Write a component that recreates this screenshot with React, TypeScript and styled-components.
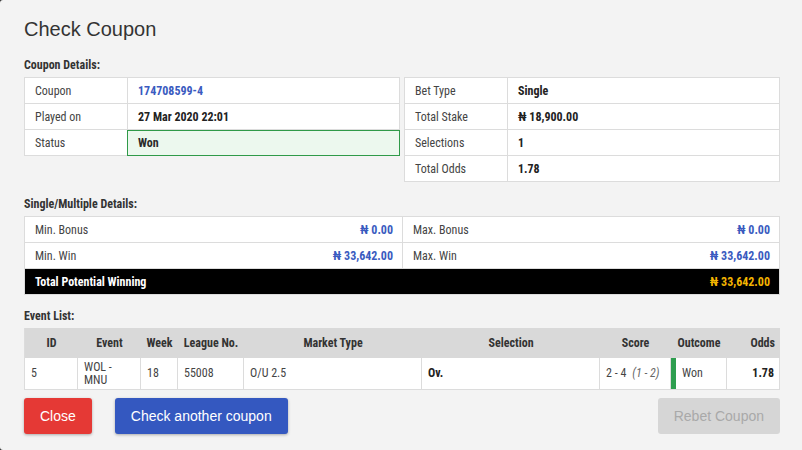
import React from "react";
import styled, { createGlobalStyle, css } from "styled-components";

const GlobalStyle = createGlobalStyle`
  html, body { margin: 0; padding: 0; background: #2f2f2f; }
  *, *::before, *::after { box-sizing: border-box; }
`;

const BORDER = "#dcdcdc";
const BLUE = "#3a5bbf";
const GREEN = "#2f9a48";

const Modal = styled.div`
  min-height: 100vh;
  background: #f3f3f3;
  border-radius: 3px 0 0 3px;
  padding: 17px 22px 16px 24px;
  font-family: "Roboto Condensed", "Roboto", sans-serif;
  font-size: 12px;
  color: #333;
`;

const Title = styled.h1`
  margin: 0 0 16px;
  font-family: "Liberation Sans", Arial, sans-serif;
  font-size: 20px;
  line-height: 24px;
  font-weight: 400;
  color: #333;
`;

const SectionLabel = styled.div<{ $gap?: number }>`
  margin: ${(p) => p.$gap ?? 0}px 0 4px;
  font-size: 12px;
  line-height: 16px;
  font-weight: 700;
  color: #333;
`;

/* ---------- coupon info tables ---------- */
const InfoPair = styled.div`
  display: flex;
  gap: 4px;
  align-items: flex-start;
`;

const InfoTable = styled.div`
  flex: 1;
  display: grid;
  grid-template-columns: 103px 1fr;
  background: #fff;
  border-top: 1px solid ${BORDER};
  border-left: 1px solid ${BORDER};
`;

const InfoLabel = styled.div`
  height: 26px;
  display: flex;
  align-items: center;
  padding: 0 10px;
  border-right: 1px solid ${BORDER};
  border-bottom: 1px solid ${BORDER};
  color: #444;
`;

const InfoValue = styled.div<{ $tone?: "link" | "won" }>`
  position: relative;
  height: 26px;
  display: flex;
  align-items: center;
  padding: 0 10px;
  border-right: 1px solid ${BORDER};
  border-bottom: 1px solid ${BORDER};
  font-weight: 700;
  color: #222;
  ${(p) =>
    p.$tone === "link" &&
    css`
      color: ${BLUE};
    `}
  ${(p) =>
    p.$tone === "won" &&
    css`
      background: #ecf8ee;
      color: #2a2a2a;
      &::after {
        content: "";
        position: absolute;
        left: -1px;
        top: 0;
        right: -1px;
        bottom: -1px;
        border: 1px solid ${GREEN};
        pointer-events: none;
      }
    `}
`;

/* ---------- single / multiple details ---------- */
const DetailsBox = styled.div`
  background: #fff;
  border: 1px solid ${BORDER};
`;

const DetailsRow = styled.div`
  display: grid;
  grid-template-columns: 1fr 1fr;
  border-bottom: 1px solid ${BORDER};
`;

const DetailsCell = styled.div`
  height: 25px;
  display: flex;
  align-items: center;
  justify-content: space-between;
  padding: 0 9px 0 10px;
  color: #444;
  & + & {
    border-left: 1px solid ${BORDER};
  }
`;

const Amount = styled.span<{ $gold?: boolean }>`
  font-weight: 700;
  color: ${(p) => (p.$gold ? "#f4b400" : BLUE)};
`;

const TotalRow = styled.div`
  height: 25px;
  display: flex;
  align-items: center;
  justify-content: space-between;
  padding: 0 9px 0 10px;
  background: #000;
  color: #fff;
  font-weight: 700;
`;

/* ---------- event list ---------- */
const EventGrid = styled.div`
  display: grid;
  grid-template-columns: 53px 63px 37px 66px 178px 178px 71px 56px 53px;
  background: #fff;
  border-left: 1px solid ${BORDER};
`;

type Align = "left" | "center" | "right";
const justify = (a?: Align) =>
  a === "right" ? "flex-end" : a === "left" ? "flex-start" : "center";

const HeadCell = styled.div<{ $align?: Align }>`
  height: 30px;
  display: flex;
  align-items: center;
  justify-content: ${(p) => justify(p.$align)};
  padding: 0 5px;
  background: #d9d9d9;
  font-weight: 700;
  color: #333;
`;

const DataCell = styled.div<{ $align?: Align; $bold?: boolean; $won?: boolean }>`
  height: 32px;
  display: flex;
  align-items: center;
  justify-content: ${(p) => justify(p.$align ?? "left")};
  padding: 0 5px 0 6px;
  border-right: 1px solid ${BORDER};
  border-bottom: 1px solid ${BORDER};
  line-height: 12.5px;
  color: ${(p) => (p.$bold ? "#222" : "#444")};
  font-weight: ${(p) => (p.$bold ? 700 : 400)};
  ${(p) =>
    p.$won &&
    css`
      box-shadow: inset 5px 0 0 #2e9e4f;
      padding-left: 11px;
    `}
`;

const HalfScore = styled.span`
  margin-left: 6px;
  font-style: italic;
  color: #666;
`;

/* ---------- buttons ---------- */
const ButtonRow = styled.div`
  display: flex;
  align-items: center;
  margin-top: 8px;
`;

const Button = styled.button<{ $variant: "danger" | "primary" | "disabled" }>`
  height: 36px;
  padding: 0 16px;
  border: 0;
  border-radius: 3px;
  font-family: "Liberation Sans", Arial, sans-serif;
  font-size: 14px;
  color: #fff;
  cursor: pointer;
  box-shadow: 0 1px 3px rgba(0, 0, 0, 0.3);
  ${(p) =>
    p.$variant === "danger" &&
    css`
      background: #e53935;
    `}
  ${(p) =>
    p.$variant === "primary" &&
    css`
      background: #3458c0;
      margin-left: 23px;
    `}
  ${(p) =>
    p.$variant === "disabled" &&
    css`
      background: #d6d6d6;
      color: #a9a9a9;
      box-shadow: none;
      margin-left: auto;
      cursor: default;
    `}
`;

const leftInfo: [string, string, "link" | "won" | undefined][] = [
  ["Coupon", "174708599-4", "link"],
  ["Played on", "27 Mar 2020 22:01", undefined],
  ["Status", "Won", "won"],
];

const rightInfo: [string, string][] = [
  ["Bet Type", "Single"],
  ["Total Stake", "₦ 18,900.00"],
  ["Selections", "1"],
  ["Total Odds", "1.78"],
];

const headers: [string, Align][] = [
  ["ID", "center"],
  ["Event", "center"],
  ["Week", "center"],
  ["League No.", "center"],
  ["Market Type", "center"],
  ["Selection", "center"],
  ["Score", "center"],
  ["Outcome", "center"],
  ["Odds", "right"],
];

export default function App() {
  return (
    <>
      <GlobalStyle />
      <Modal>
        <Title>Check Coupon</Title>

        <SectionLabel>Coupon Details:</SectionLabel>
        <InfoPair>
          <InfoTable>
            {leftInfo.map(([label, value, tone]) => (
              <React.Fragment key={label}>
                <InfoLabel>{label}</InfoLabel>
                <InfoValue $tone={tone}>{value}</InfoValue>
              </React.Fragment>
            ))}
          </InfoTable>
          <InfoTable>
            {rightInfo.map(([label, value]) => (
              <React.Fragment key={label}>
                <InfoLabel>{label}</InfoLabel>
                <InfoValue>{value}</InfoValue>
              </React.Fragment>
            ))}
          </InfoTable>
        </InfoPair>

        <SectionLabel $gap={14}>Single/Multiple Details:</SectionLabel>
        <DetailsBox>
          <DetailsRow>
            <DetailsCell>
              Min. Bonus <Amount>₦ 0.00</Amount>
            </DetailsCell>
            <DetailsCell>
              Max. Bonus <Amount>₦ 0.00</Amount>
            </DetailsCell>
          </DetailsRow>
          <DetailsRow>
            <DetailsCell>
              Min. Win <Amount>₦ 33,642.00</Amount>
            </DetailsCell>
            <DetailsCell>
              Max. Win <Amount>₦ 33,642.00</Amount>
            </DetailsCell>
          </DetailsRow>
          <TotalRow>
            Total Potential Winning <Amount $gold>₦ 33,642.00</Amount>
          </TotalRow>
        </DetailsBox>

        <SectionLabel $gap={13}>Event List:</SectionLabel>
        <EventGrid>
          {headers.map(([h, a]) => (
            <HeadCell key={h} $align={a}>
              {h}
            </HeadCell>
          ))}
          <DataCell>5</DataCell>
          <DataCell>WOL - MNU</DataCell>
          <DataCell>18</DataCell>
          <DataCell>55008</DataCell>
          <DataCell>O/U 2.5</DataCell>
          <DataCell $bold>Ov.</DataCell>
          <DataCell>
            2 - 4 <HalfScore>(1 - 2)</HalfScore>
          </DataCell>
          <DataCell $won>Won</DataCell>
          <DataCell $align="right" $bold>
            1.78
          </DataCell>
        </EventGrid>

        <ButtonRow>
          <Button $variant="danger">Close</Button>
          <Button $variant="primary">Check another coupon</Button>
          <Button $variant="disabled">Rebet Coupon</Button>
        </ButtonRow>
      </Modal>
    </>
  );
}
